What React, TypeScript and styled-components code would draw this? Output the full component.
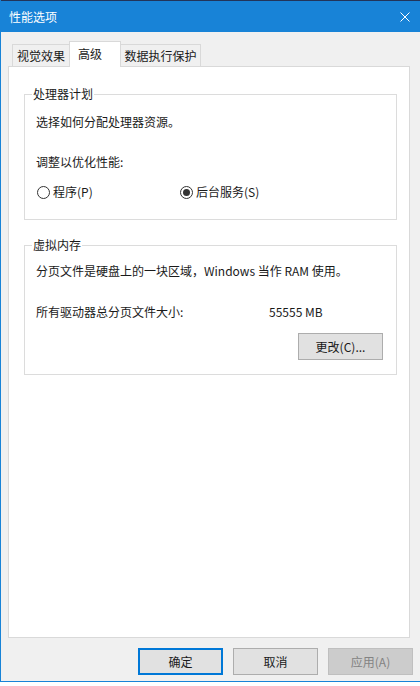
import React from "react";
import styled, { createGlobalStyle } from "styled-components";

const GlobalStyle = createGlobalStyle`
  html, body {
    margin: 0;
    padding: 0;
    background: #ffffff;
  }
  body {
    font-family: "Noto Sans CJK SC", "Microsoft YaHei UI", sans-serif;
    font-size: 12px;
    color: #1a1a1a;
  }
`;

const Window = styled.div`
  width: 420px;
  height: 682px;
  box-sizing: border-box;
  display: flex;
  flex-direction: column;
  background: #f0f0f0;
  border-left: 1px solid #1883d7;
  border-bottom: 1px solid #1883d7;
`;

const TitleBar = styled.div`
  height: 32px;
  box-sizing: border-box;
  flex: none;
  display: flex;
  align-items: center;
  padding: 0 10px 0 8px;
  background: #1883d7;
  border-top: 1px solid #22345a;
  color: #ffffff;
  line-height: 16px;
`;

const CloseIcon = styled.svg`
  margin-left: auto;
  width: 10px;
  height: 10px;
`;

const Body = styled.div`
  padding: 9px 10px 0 7px;
`;

const TabStrip = styled.div`
  display: flex;
  align-items: flex-end;
  height: 25px;
  padding-left: 4px;
`;

const Tab = styled.div<{ $width: number; $active?: boolean }>`
  position: relative;
  box-sizing: border-box;
  width: ${(p) => p.$width}px;
  height: ${(p) => (p.$active ? 26 : 22)}px;
  margin-right: -1px;
  margin-bottom: ${(p) => (p.$active ? -1 : 0)}px;
  display: flex;
  align-items: center;
  justify-content: ${(p) => (p.$active ? "flex-start" : "center")};
  padding-left: ${(p) => (p.$active ? 8 : 0)}px;
  padding-bottom: ${(p) => (p.$active ? 1 : 0)}px;
  border: 1px solid #d9d9d9;
  border-bottom: none;
  background: ${(p) => (p.$active ? "#ffffff" : "#f0f0f0")};
  z-index: ${(p) => (p.$active ? 1 : 0)};
  line-height: 16px;
`;

const Panel = styled.div`
  box-sizing: border-box;
  height: 572px;
  padding: 19px 12px 0 15px;
  background: #ffffff;
  border: 1px solid #d9d9d9;
`;

const Group = styled.fieldset`
  margin: 0;
  padding: 0;
  min-width: 0;
  border: 1px solid #dcdcdc;

  & + & {
    margin-top: 17px;
  }
`;

const Legend = styled.legend`
  margin-left: 7px;
  padding: 0 1px;
  line-height: 16px;
`;

const GroupBody = styled.div<{ $top: number; $bottom: number }>`
  padding: ${(p) => p.$top}px 13px ${(p) => p.$bottom}px 11px;
  display: flex;
  flex-direction: column;
`;

const Line = styled.div<{ $gap?: number }>`
  line-height: 16px;
  margin-top: ${(p) => p.$gap ?? 0}px;
`;

const RadioRow = styled.div<{ $gap: number }>`
  display: grid;
  grid-template-columns: 143px auto;
  margin-top: ${(p) => p.$gap}px;
  padding-left: 1px;
  line-height: 16px;
`;

const RadioOption = styled.label`
  display: flex;
  align-items: center;
  gap: 3px;
`;

const RadioCircle = styled.span<{ $checked?: boolean }>`
  box-sizing: border-box;
  width: 13px;
  height: 13px;
  border: 1px solid #333333;
  border-radius: 50%;
  background: #ffffff;
  display: flex;
  align-items: center;
  justify-content: center;

  &::after {
    content: "";
    display: ${(p) => (p.$checked ? "block" : "none")};
    width: 7px;
    height: 7px;
    border-radius: 50%;
    background: #333333;
  }
`;

const ValueRow = styled.div<{ $gap: number }>`
  display: grid;
  grid-template-columns: 233px auto;
  margin-top: ${(p) => p.$gap}px;
  line-height: 16px;
`;

const ButtonRight = styled.div<{ $gap: number }>`
  display: flex;
  justify-content: flex-end;
  margin-top: ${(p) => p.$gap}px;
`;

const Button = styled.button<{ $variant?: "default" | "disabled" }>`
  box-sizing: border-box;
  width: 85px;
  height: 27px;
  padding: 0;
  font: inherit;
  line-height: 16px;
  color: ${(p) => (p.$variant === "disabled" ? "#838383" : "#1a1a1a")};
  background: ${(p) => (p.$variant === "disabled" ? "#cccccc" : "#e1e1e1")};
  border: ${(p) =>
    p.$variant === "default"
      ? "2px solid #0078d7"
      : p.$variant === "disabled"
      ? "1px solid #bfbfbf"
      : "1px solid #adadad"};
  border-radius: 0;
`;

const ButtonBar = styled.div`
  display: flex;
  justify-content: flex-end;
  gap: 10px;
  padding: 10px 7px 0 0;
`;

export default function App() {
  return (
    <>
      <GlobalStyle />
      <Window>
        <TitleBar>
          <span>性能选项</span>
          <CloseIcon viewBox="0 0 10 10">
            <path d="M0.5 0.5 L9.5 9.5 M9.5 0.5 L0.5 9.5" stroke="#ffffff" strokeWidth="1" fill="none" />
          </CloseIcon>
        </TitleBar>
        <Body>
          <TabStrip>
            <Tab $width={58}>视觉效果</Tab>
            <Tab $width={52} $active>
              高级
            </Tab>
            <Tab $width={81}>数据执行保护</Tab>
          </TabStrip>
          <Panel>
            <Group>
              <Legend>处理器计划</Legend>
              <GroupBody $top={12} $bottom={19}>
                <Line>选择如何分配处理器资源。</Line>
                <Line $gap={24}>调整以优化性能:</Line>
                <RadioRow $gap={14}>
                  <RadioOption>
                    <RadioCircle />
                    程序(P)
                  </RadioOption>
                  <RadioOption>
                    <RadioCircle $checked />
                    后台服务(S)
                  </RadioOption>
                </RadioRow>
              </GroupBody>
            </Group>
            <Group>
              <Legend>虚拟内存</Legend>
              <GroupBody $top={10} $bottom={14}>
                <Line>分页文件是硬盘上的一块区域，Windows 当作 RAM 使用。</Line>
                <ValueRow $gap={25}>
                  <span>所有驱动器总分页文件大小:</span>
                  <span>55555 MB</span>
                </ValueRow>
                <ButtonRight $gap={13}>
                  <Button>更改(C)...</Button>
                </ButtonRight>
              </GroupBody>
            </Group>
          </Panel>
        </Body>
        <ButtonBar>
          <Button $variant="default">确定</Button>
          <Button>取消</Button>
          <Button $variant="disabled">应用(A)</Button>
        </ButtonBar>
      </Window>
    </>
  );
}
